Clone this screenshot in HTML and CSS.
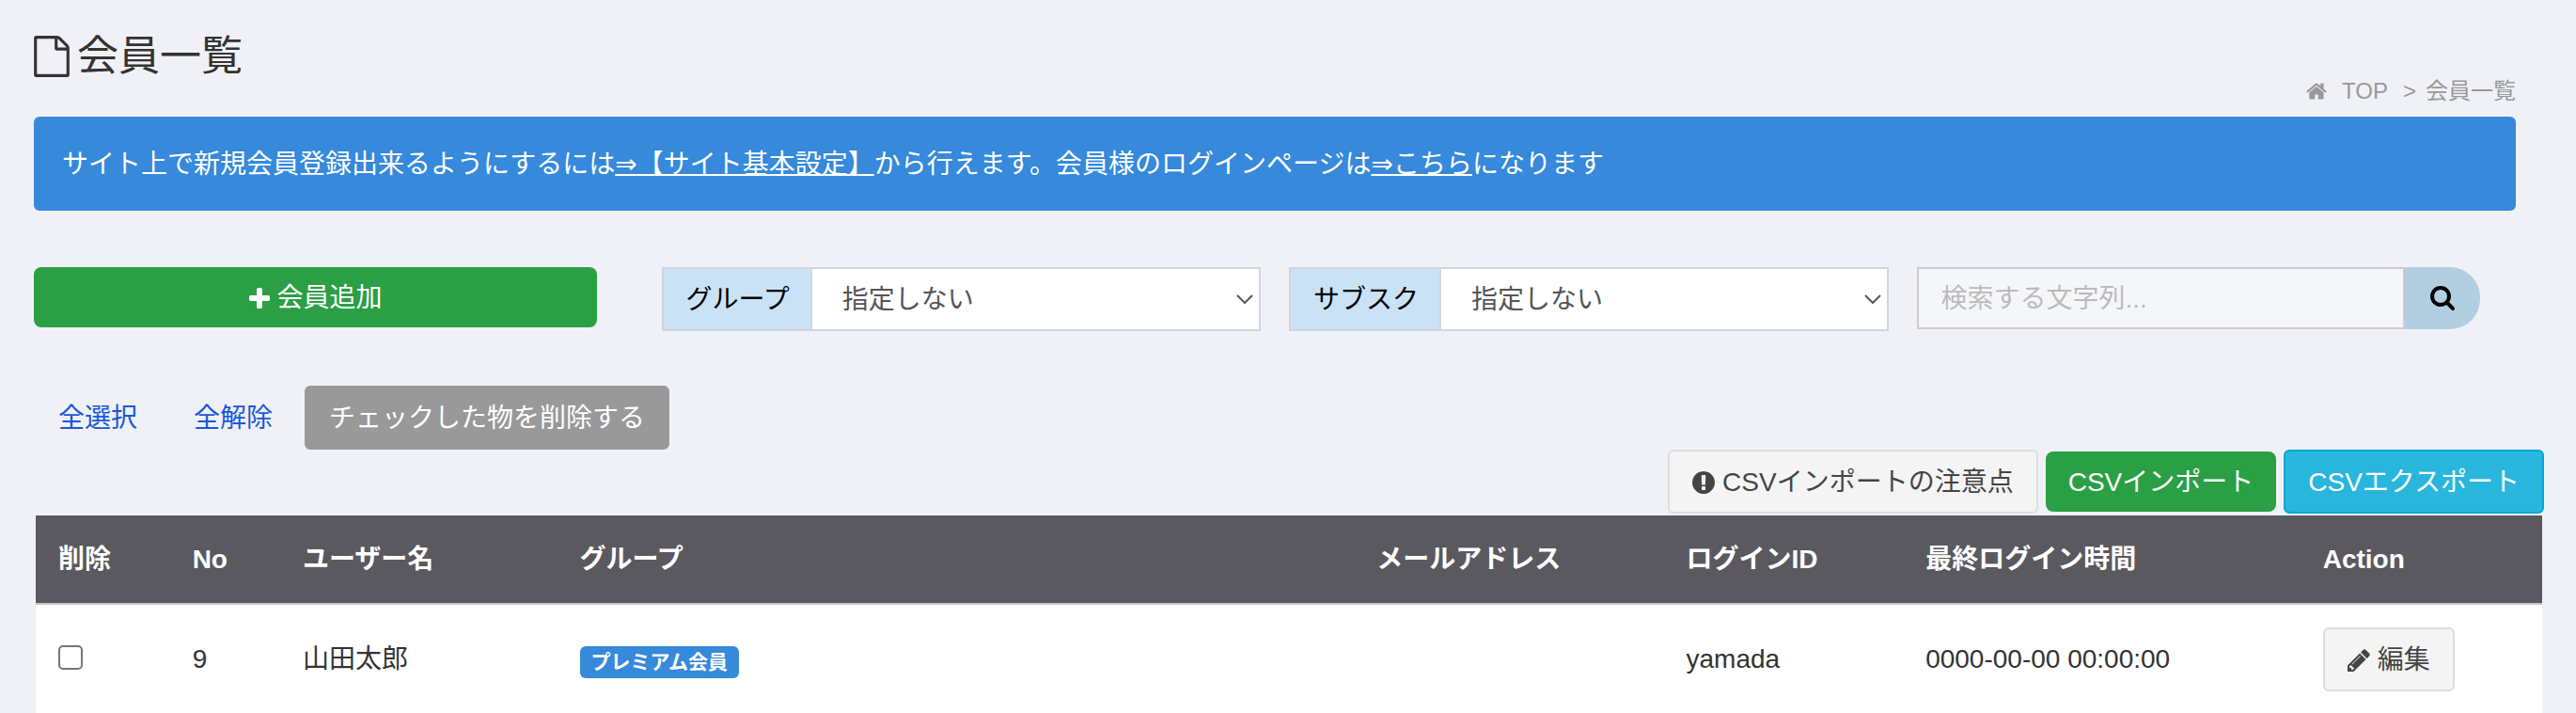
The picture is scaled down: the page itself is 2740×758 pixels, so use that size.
FILE: index.html
```
<!DOCTYPE html>
<html lang="ja">
<head>
    <meta charset="UTF-8">
    <meta name="viewport" content="width=device-width, initial-scale=1.0">
    <title>会員一覧</title>
    <link rel="stylesheet" href="styles.css">
</head>
<body>

    <header class="page-header">
        <h1>
            <svg class="icon-file" viewBox="128 0 1536 1792" aria-hidden="true"><path d="M1596 380q28 28 48 76t20 88v1152q0 40-28 68t-68 28h-1344q-40 0-68-28t-28-68v-1600q0-40 28-68t68-28h896q40 0 88 20t76 48zm-444-244v376h376q-10-29-22-41l-313-313q-12-12-41-22zm384 1528v-1024h-416q-40 0-68-28t-28-68v-416h-768v1536h1280z"/></svg>
            会員一覧
        </h1>
        <nav class="breadcrumb">
            <svg class="icon-home" viewBox="64 0 1664 1792" aria-hidden="true"><path d="M1472 992v480q0 26-19 45t-45 19h-384v-384h-256v384h-384q-26 0-45-19t-19-45v-480q0-1 .5-3t.5-3l575-474 575 474q1 2 1 6zm223-69l-62 74q-8 9-21 11h-3q-13 0-21-7l-692-577-692 577q-12 8-24 7-13-2-21-11l-62-74q-8-10-7-23.5t11-21.5l719-599q32-26 76-26t76 26l244 204v-195q0-14 9-23t23-9h192q14 0 23 9t9 23v408l219 182q10 8 11 21.5t-7 23.5z"/></svg>
            <a href="#">TOP</a>
            <span class="separator">&gt;</span>
            <span>会員一覧</span>
        </nav>
    </header>

    <div class="alert">サイト上で新規会員登録出来るようにするには<a href="#"><span class="arrow">⇒</span>【サイト基本設定】</a>から行えます。会員様のログインページは<a href="#"><span class="arrow">⇒</span>こちら</a>になります</div>

    <div class="filters">
        <div class="filter-col">
            <button type="button" class="btn btn-green btn-add">
                <svg class="icon-plus" viewBox="192 128 1408 1408" aria-hidden="true"><path d="M1600 736v192q0 40-28 68t-68 28h-416v416q0 40-28 68t-68 28h-192q-40 0-68-28t-28-68v-416h-416q-40 0-68-28t-28-68v-192q0-40 28-68t68-28h416v-416q0-40 28-68t68-28h192q40 0 68 28t28 68v416h416q40 0 68 28t28 68z"/></svg>
                会員追加
            </button>
        </div>
        <div class="filter-col">
            <div class="select-group">
                <label for="group">グループ</label>
                <select id="group">
                    <option>指定しない</option>
                </select>
                <svg class="chevron" viewBox="0 0 18 10" aria-hidden="true"><path d="M1 1l8 8 8-8"/></svg>
            </div>
        </div>
        <div class="filter-col">
            <div class="select-group">
                <label for="subsc">サブスク</label>
                <select id="subsc">
                    <option>指定しない</option>
                </select>
                <svg class="chevron" viewBox="0 0 18 10" aria-hidden="true"><path d="M1 1l8 8 8-8"/></svg>
            </div>
        </div>
        <div class="filter-col">
            <form class="search">
                <input type="text" placeholder="検索する文字列..." aria-label="検索する文字列">
                <button type="button" aria-label="検索">
                    <svg class="icon-search" viewBox="64 128 1664 1664" aria-hidden="true"><path d="M1216 832q0-185-131.5-316.5t-316.5-131.5-316.5 131.5-131.5 316.5 131.5 316.5 316.5 131.5 316.5-131.5 131.5-316.5zm512 832q0 52-38 90t-90 38q-54 0-90-38l-343-342q-179 124-399 124-143 0-273.5-55.5t-225-150-150-225-55.5-273.5 55.5-273.5 150-225 225-150 273.5-55.5 273.5 55.5 225 150 150 225 55.5 273.5q0 220-124 399l343 343q37 37 37 90z"/></svg>
                </button>
            </form>
        </div>
    </div>

    <div class="actions">
        <button type="button" class="btn btn-link">全選択</button>
        <button type="button" class="btn btn-link">全解除</button>
        <button type="button" class="btn btn-gray">チェックした物を削除する</button>
    </div>

    <div class="actions csv-actions">
        <button type="button" class="btn btn-default">
            <svg class="icon-info" viewBox="128 128 1536 1536" aria-hidden="true"><path d="M896 128q209 0 385.5 103t279.5 279.5 103 385.5-103 385.5-279.5 279.5-385.5 103-385.5-103-279.5-279.5-103-385.5 103-385.5 279.5-279.5 385.5-103zm128 1247v-190q0-14-9-23.5t-22-9.5h-192q-13 0-23 10t-10 23v190q0 13 10 23t23 10h192q13 0 22-9.5t9-23.5zm-2-344l18-621q0-12-10-18-10-8-24-8h-220q-14 0-24 8-10 6-10 18l18 621q0 10 10 17.5t24 7.5h185q14 0 23.5-7.5t10.5-17.5z"/></svg>
            CSVインポートの注意点
        </button>
        <button type="button" class="btn btn-green">CSVインポート</button>
        <button type="button" class="btn btn-blue">CSVエクスポート</button>
    </div>

    <div class="table-wrap">
        <table class="members">
            <colgroup>
                <col class="col-check">
                <col class="col-no">
                <col class="col-name">
                <col class="col-group">
                <col class="col-mail">
                <col class="col-login">
                <col class="col-time">
                <col class="col-action">
            </colgroup>
            <thead>
                <tr>
                    <th>削除</th>
                    <th>No</th>
                    <th>ユーザー名</th>
                    <th>グループ</th>
                    <th>メールアドレス</th>
                    <th>ログインID</th>
                    <th>最終ログイン時間</th>
                    <th>Action</th>
                </tr>
            </thead>
            <tbody>
                <tr>
                    <td><input type="checkbox" aria-label="山田太郎を選択"></td>
                    <td>9</td>
                    <td>山田太郎</td>
                    <td><span class="badge">プレミアム会員</span></td>
                    <td></td>
                    <td>yamada</td>
                    <td>0000-00-00 00:00:00</td>
                    <td>
                        <button type="button" class="btn btn-default">
                            <svg class="icon-pencil" viewBox="128 128 1536 1536" aria-hidden="true"><path d="M491 1536l91-91-235-235-91 91v107h128v128h107zm523-928q0-22-22-22-10 0-17 7l-542 542q-7 7-7 17 0 22 22 22 10 0 17-7l542-542q7-7 7-17zm-54-192l416 416-832 832h-416v-416zm683 96q0 53-37 90l-166 166-416-416 166-165q36-38 90-38 53 0 91 38l235 234q37 39 37 91z"/></svg>
                            編集
                        </button>
                    </td>
                </tr>
            </tbody>
        </table>
    </div>

</body>
</html>
```
FILE: styles.css
```
* {
    box-sizing: border-box;
}

body {
    margin: 0;
    padding: 0 34px 0 36px;
    background-color: #f0f1f6;
    color: #333;
    font-family: "Liberation Sans", "Noto Sans CJK JP", sans-serif;
    font-size: 28px;
    line-height: 40px;
    overflow: hidden;
}

button, input, select {
    font: inherit;
}

svg {
    flex: none;
    fill: currentColor;
}

.page-header {
    display: flex;
    justify-content: space-between;
    align-items: flex-end;
    height: 124px;
    margin-right: 30px;
}

h1 {
    display: flex;
    align-items: center;
    gap: 8px;
    align-self: flex-start;
    margin: 30px 0 0;
    font-size: 44px;
    font-weight: 400;
    line-height: 60px;
}

.icon-file {
    width: 38px;
    height: 44px;
}

.breadcrumb {
    display: flex;
    align-items: center;
    margin-bottom: 7px;
    color: #999;
    font-size: 24px;
}

.breadcrumb a {
    margin: 0 16px;
    color: inherit;
    text-decoration: none;
}

.breadcrumb .separator {
    margin-right: 10px;
}

.icon-home {
    width: 22px;
    height: 24px;
}

.alert {
    margin-right: 30px;
    padding: 31px 30px 29px;
    border-radius: 6px;
    background-color: #3689db;
    color: #fff;
}

.alert a {
    color: inherit;
    text-decoration: underline;
    text-decoration-thickness: 2px;
    text-decoration-skip-ink: none;
}

.alert .arrow {
    font-family: "DejaVu Sans", sans-serif;
}

.filters {
    display: grid;
    grid-template-columns: repeat(4, 1fr);
    align-items: start;
    margin: 60px 30px 0 -30px;
}

.filter-col {
    padding-left: 30px;
}

.btn {
    display: inline-flex;
    align-items: center;
    justify-content: center;
    gap: 8px;
    padding: 13px 24px 11px;
    border: 2px solid transparent;
    border-radius: 6px;
    cursor: pointer;
}

.btn-green {
    border: none;
    border-radius: 8px;
    background-color: #2b9f44;
    color: #fff;
}

.btn-add {
    width: 94%;
}

.btn-link {
    background: none;
    color: #1858dc;
}

.btn-gray {
    background-color: #999;
    border-color: #999;
    color: #fff;
}

.btn-default {
    background-color: #f4f4f4;
    border-color: #ddd;
    color: #444;
}

.btn-blue {
    background-color: #29b6dd;
    border-color: #00a7d8;
    color: #fff;
}

.icon-plus {
    width: 22px;
    height: 22px;
}

.icon-info,
.icon-pencil {
    width: 24px;
    height: 24px;
}

.select-group {
    display: flex;
    align-items: center;
    height: 68px;
    border: 2px solid #d1d5de;
    background-color: #fff;
}

.select-group label {
    padding: 13px 22px 11px 24px;
    border-right: 2px solid #d1d5de;
    background-color: #cae2f6;
    color: #000;
}

.select-group select {
    flex: 1;
    min-width: 0;
    height: 64px;
    padding: 1px 32px 0;
    border: none;
    background: none;
    color: #555;
    appearance: none;
}

.chevron {
    width: 18px;
    height: 10px;
    margin: 0 6px 0 -24px;
    fill: none;
    stroke: #555;
    stroke-width: 2;
    pointer-events: none;
}

.search {
    display: flex;
    width: 94%;
    height: 66px;
}

.search input {
    flex: 1;
    min-width: 0;
    padding: 1px 24px 0;
    border: 2px solid #ccc;
    background-color: #f5f6f9;
    color: #555;
}

.search input::placeholder {
    color: #bbb;
    opacity: 1;
}

.search button {
    display: flex;
    align-items: center;
    justify-content: center;
    width: 80px;
    padding: 0;
    border: none;
    border-radius: 0 32px 32px 0;
    background-color: #b1cfe1;
    color: #000;
    cursor: pointer;
}

.icon-search {
    width: 26px;
    height: 26px;
}

.actions {
    display: flex;
    align-items: center;
    gap: 8px;
    margin-top: 58px;
}

.csv-actions {
    justify-content: flex-end;
    margin: 0 0 2px;
}

.table-wrap {
    padding: 0 2px;
}

.members {
    width: 100%;
    table-layout: fixed;
    border-collapse: collapse;
    background-color: #fff;
}

.col-check { width: 5.35%; }
.col-no { width: 4.4%; }
.col-name { width: 11.05%; }
.col-group { width: 31.8%; }
.col-mail { width: 12.35%; }
.col-login { width: 9.55%; }
.col-time { width: 15.85%; }
.col-action { width: 9.65%; }

.members th,
.members td {
    padding: 24px;
    text-align: left;
    vertical-align: middle;
}

.members th {
    padding-top: 27px;
    padding-bottom: 26px;
    border-bottom: 2px solid #c8c8cc;
    background-color: #5a595f;
    color: #fff;
}

.members .btn {
    vertical-align: top;
}

.members input {
    display: block;
    width: 26px;
    height: 26px;
    margin: 0 0 4px;
    border: 2px solid #767676;
    border-radius: 5px;
    background-color: #fff;
    appearance: none;
}

.members input:checked {
    background-color: #3689db;
}

.badge {
    display: inline-block;
    margin-top: 4px;
    padding: 0 12px;
    border-radius: 6px;
    background-color: #3689db;
    color: #fff;
    font-size: 21px;
    font-weight: bold;
    line-height: 34px;
    vertical-align: middle;
}
```
